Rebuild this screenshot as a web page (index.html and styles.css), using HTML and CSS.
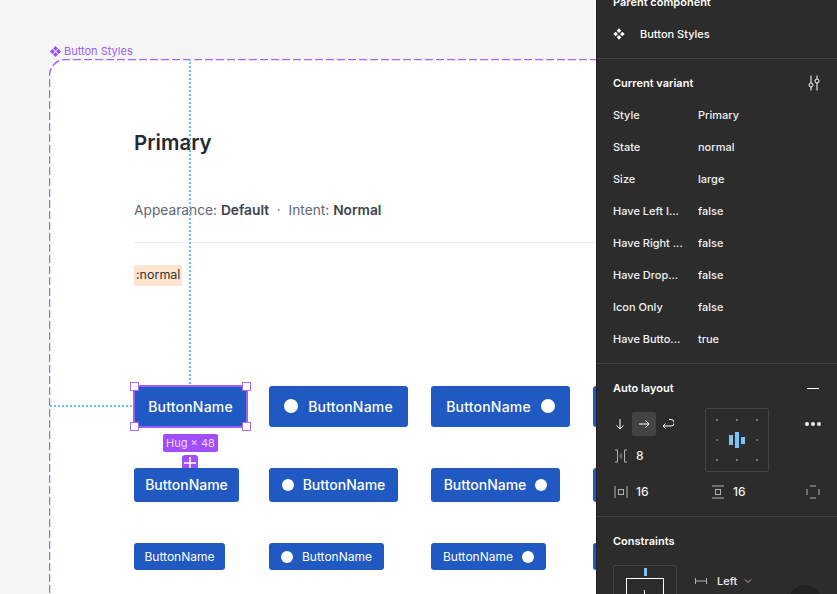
FILE: index.html
```html
<!DOCTYPE html>
<html lang="en">
<head>
  <meta charset="UTF-8">
  <meta name="viewport" content="width=device-width, initial-scale=1.0">
  <title>Button Styles</title>
  <link rel="stylesheet" href="styles.css">
</head>
<body>
  <!-- canvas -->
  <main class="canvas">
    <div class="frame-label">
      <svg class="comp-icon" viewBox="0 0 12 12" width="11" height="11"><path d="M6 0 8.600 2.700 6 5.300 3.400 2.700zM2.700 3.400 5.300 6 2.700 8.600 0 6zM9.300 3.400 12 6 9.300 8.600 6.700 6zM6 6.700 8.600 9.300 6 12 3.400 9.300z"/></svg>
      <span>Button Styles</span>
    </div>

    <section class="frame">
      <svg class="frame-dash" width="700" height="600"><path d="M.5 600V16.500A16 16 0 0 1 16.500 .5H700"/></svg>
      <h1 class="title">Primary</h1>
      <p class="meta">Appearance: <b>Default</b> &nbsp;·&nbsp; Intent: <b>Normal</b></p>
      <hr class="rule">
      <div class="tag-row"><span class="tag">:normal</span></div>

      <div class="btn-grid">
        <div class="btn btn-lg selected">
          ButtonName
          <i class="handle tl"></i><i class="handle tr"></i><i class="handle bl"></i><i class="handle br"></i>
          <span class="hug">Hug × 48</span>
          <span class="add"><svg viewBox="0 0 16 16" width="16" height="16"><path d="M8 2v12M2 8h12"/></svg></span>
        </div>
        <div class="btn btn-lg icon-left"><i class="dot"></i>ButtonName</div>
        <div class="btn btn-lg icon-right">ButtonName<i class="dot"></i></div>
        <div class="btn btn-lg"></div>

        <div class="btn btn-md">ButtonName</div>
        <div class="btn btn-md icon-left"><i class="dot"></i>ButtonName</div>
        <div class="btn btn-md icon-right">ButtonName<i class="dot"></i></div>
        <div class="btn btn-md"></div>

        <div class="btn btn-sm">ButtonName</div>
        <div class="btn btn-sm icon-left"><i class="dot"></i>ButtonName</div>
        <div class="btn btn-sm icon-right">ButtonName<i class="dot"></i></div>
        <div class="btn btn-sm"></div>
      </div>
    </section>

    <!-- measure guides -->
    <div class="guide guide-v"></div>
    <div class="guide guide-h"></div>
  </main>

  <!-- right panel -->
  <aside class="panel">
    <section class="panel-sec first">
      <h2 class="panel-head">Parent component</h2>
      <div class="parent-row">
        <svg class="parent-icon" viewBox="0 0 12 12" width="12" height="12"><path d="M6 .3 8.300 2.700 6 5 3.700 2.700zM2.700 3.700 5 6 2.700 8.300 .3 6zM9.300 3.700 11.700 6 9.300 8.300 7 6zM6 7 8.300 9.300 6 11.700 3.700 9.300z"/></svg>
        <span>Button Styles</span>
      </div>
    </section>

    <section class="panel-sec">
      <div class="head-row">
        <h2 class="panel-head">Current variant</h2>
        <svg class="line-icon" viewBox="0 0 14 16" width="14" height="16"><path d="M4 .5V8M4 12v3.500M10 .5V4M10 8v7.500"/><circle cx="4" cy="10" r="2"/><circle cx="10" cy="6" r="2"/></svg>
      </div>
      <div class="props">
        <div class="prop"><span>Style</span><span>Primary</span></div>
        <div class="prop"><span>State</span><span>normal</span></div>
        <div class="prop"><span>Size</span><span>large</span></div>
        <div class="prop"><span>Have Left I...</span><span>false</span></div>
        <div class="prop"><span>Have Right ...</span><span>false</span></div>
        <div class="prop"><span>Have Drop...</span><span>false</span></div>
        <div class="prop"><span>Icon Only</span><span>false</span></div>
        <div class="prop"><span>Have Butto...</span><span>true</span></div>
      </div>
    </section>

    <section class="panel-sec">
      <div class="head-row">
        <h2 class="panel-head">Auto layout</h2>
        <span class="minus"></span>
      </div>
      <div class="al-grid">
        <div class="dirs">
          <span class="dir"><svg class="line-icon" viewBox="0 0 12 12" width="12" height="12"><path d="M6 1v10M2.500 7.500 6 11l3.500-3.500"/></svg></span>
          <span class="dir on"><svg class="line-icon" viewBox="0 0 12 12" width="12" height="12"><path d="M1 6h10M7.500 2.500 11 6 7.500 9.500"/></svg></span>
          <span class="dir"><svg class="line-icon" viewBox="0 0 12 12" width="12" height="12"><path d="M7 1.500h2a3 3 0 0 1 0 6.500H1M3.500 5.500 1 8l2.500 2.500"/></svg></span>
        </div>
        <div class="align-box">
          <i class="pip"></i><i class="pip"></i><i class="pip"></i>
          <i class="pip"></i>
          <span class="bars"><b class="b1"></b><b class="b2"></b><b class="b3"></b></span>
          <i class="pip"></i>
          <i class="pip"></i><i class="pip"></i><i class="pip"></i>
        </div>
        <div class="more"><i></i><i></i><i></i></div>

        <div class="al-val gap-row">
          <svg class="line-icon dim" viewBox="0 0 14 14" width="14" height="14"><path d="M1 1h2.500v12H1M13 1h-2.500v12H13M7 4.500v5"/></svg>
          <span>8</span>
        </div>

        <div class="al-val pad-row">
          <svg class="line-icon dim" viewBox="0 0 14 14" width="14" height="14"><path d="M1 1v12M13 1v12"/><rect x="4.500" y="4.500" width="5" height="5"/></svg>
          <span>16</span>
        </div>
        <div class="al-val pad-row second">
          <svg class="line-icon dim" viewBox="0 0 14 14" width="14" height="14"><path d="M1 1h12M1 13h12"/><rect x="4.500" y="4.500" width="5" height="5"/></svg>
          <span>16</span>
        </div>
        <div class="pad-row indiv">
          <svg class="line-icon dim" viewBox="0 0 14 14" width="14" height="14"><path d="M4 1h6M4 13h6M1 4v6M13 4v6"/></svg>
        </div>
      </div>
    </section>

    <section class="panel-sec">
      <h2 class="panel-head">Constraints</h2>
      <div class="constraints">
        <div class="c-box">
          <i class="c-tick"></i>
          <div class="c-inner"><i class="c-cross"></i></div>
        </div>
        <div class="c-select">
          <svg class="line-icon dim" viewBox="0 0 12 8" width="12" height="8"><path d="M.5 1v6M11.500 1v6M1 4h10"/></svg>
          <span>Left</span>
          <svg class="line-icon dim chev" viewBox="0 0 8 6" width="8" height="6"><path d="M1 1.500 4 4.500 7 1.500"/></svg>
        </div>
      </div>
    </section>

    <div class="help"></div>
  </aside>
</body>
</html>
```

FILE: styles.css
```css
/* General */
html, body {
  margin: 0;
  height: 100%;
}

body {
  width: 837px;
  height: 594px;
  display: flex;
  overflow: hidden;
  font-family: 'Inter', 'Liberation Sans', sans-serif;
  background-color: #f5f5f5;
}

/* Canvas */
.canvas {
  position: relative;
  width: 596px;
  height: 594px;
  flex-shrink: 0;
  padding-top: 44px;
  box-sizing: border-box;
  overflow: hidden;
}

.frame-label {
  display: flex;
  align-items: center;
  gap: 3px;
  height: 14px;
  margin-left: 50px;
  margin-bottom: 1px;
  font-size: 11px;
  color: #9d5cf0;
}

.comp-icon {
  fill: #9747ff;
}

.frame {
  position: relative;
  width: 700px;
  height: 600px;
  margin-left: 49px;
  padding: 70px 0 0 85px;
  box-sizing: border-box;
  background-color: #fff;
  border-top-left-radius: 16px;
}

.frame-dash {
  position: absolute;
  left: 0;
  top: 0;
  fill: none;
  stroke: #a566f8;
  stroke-width: 1.500;
  stroke-dasharray: 8 3;
}

.title {
  margin: 0;
  font-size: 20.500px;
  line-height: 28px;
  font-weight: 600;
  color: #24292f;
}

.meta {
  margin: 43px 0 22px;
  font-size: 13.750px;
  line-height: 20px;
  color: #5f6773;
}

.meta b {
  font-weight: 600;
  color: #3d444f;
}

.rule {
  margin: 0;
  border: 0;
  border-top: 1px solid #e9ebef;
}

.tag-row {
  margin-top: 20px;
  height: 21px;
}

.tag {
  display: inline-block;
  width: 48px;
  height: 21px;
  box-sizing: border-box;
  padding-left: 2px;
  border-radius: 2px;
  background-color: #ffe5cf;
  font-size: 12.500px;
  line-height: 20px;
  color: #333;
}

/* Buttons */
.btn-grid {
  display: grid;
  grid-template-columns: 135px 162px 162px 162px;
  grid-auto-rows: min-content;
  row-gap: 41px;
  justify-items: start;
  margin-top: 102px;
}

.btn {
  position: relative;
  display: flex;
  align-items: center;
  justify-content: center;
  box-sizing: border-box;
  border-radius: 3px;
  background-color: #2059c2;
  color: #fff;
}

.dot {
  display: block;
  border-radius: 50%;
  background-color: #fff;
}

.btn-lg {
  width: 113px;
  height: 41px;
  padding-bottom: 1px;
  font-size: 14px;
  letter-spacing: .2px;
  font-weight: 500;
}

.btn-lg.icon-left, .btn-lg.icon-right {
  width: 139px;
  gap: 10px;
}

.btn-lg .dot {
  width: 14px;
  height: 14px;
}

.btn-md {
  width: 105px;
  height: 34px;
  padding-bottom: 1px;
  font-size: 14px;
  font-weight: 500;
}

.btn-md.icon-left, .btn-md.icon-right {
  width: 129px;
  gap: 9px;
}

.btn-md .dot {
  width: 12px;
  height: 12px;
}

.btn-sm {
  width: 91px;
  height: 27px;
  font-size: 12px;
}

.btn-sm.icon-left, .btn-sm.icon-right {
  width: 115px;
  gap: 9px;
}

.btn-sm .dot {
  width: 12px;
  height: 12px;
}

/* Selection overlay */
.selected {
  outline: 2px solid #9d5ff5;
  outline-offset: -1px;
  border-radius: 0;
}

.handle {
  position: absolute;
  width: 7px;
  height: 7px;
  background-color: #fff;
  border: 1px solid #a66bf7;
}

.tl { left: -4px; top: -4px; }
.tr { right: -4px; top: -4px; }
.bl { left: -4px; bottom: -4px; }
.br { right: -4px; bottom: -4px; }

.hug {
  position: absolute;
  left: 29px;
  top: 48px;
  width: 55px;
  height: 18px;
  border-radius: 2px;
  background-color: #a14ffb;
  font-size: 11px;
  letter-spacing: 0;
  font-weight: 400;
  line-height: 18px;
  text-align: center;
  color: #ead9ff;
}

.add {
  position: absolute;
  left: 48px;
  top: 69px;
  width: 16px;
  height: 16px;
  border-radius: 3px;
  background-color: #a14ffb;
}

.add svg {
  display: block;
  fill: none;
  stroke: #fff;
  stroke-width: 1.500;
}

/* Guides */
.guide {
  position: absolute;
}

.guide-v {
  left: 190px;
  top: 59px;
  height: 325px;
  border-left: 2px dotted #6cc0ff;
  width: 0;
  margin-left: -1px;
}

.guide-h {
  left: 50px;
  top: 406px;
  width: 82px;
  border-top: 2px dotted #6cc0ff;
  margin-top: -1px;
}

/* Panel */
.panel {
  position: relative;
  width: 241px;
  height: 594px;
  flex-shrink: 0;
  box-sizing: border-box;
  overflow: hidden;
  background-color: #2c2c2c;
  border-left: 1px solid #1f1f1f;
  font-size: 11px;
  line-height: 16px;
  color: #fff;
}

.panel-sec {
  padding: 16px 16px 8px;
  border-bottom: 1px solid #444;
}

.panel-sec.first {
  margin-top: -22px;
  padding-bottom: 16px;
}

.panel-head {
  margin: 0;
  font-size: 11px;
  line-height: 16px;
  font-weight: 600;
}

.parent-row {
  display: flex;
  align-items: center;
  gap: 15px;
  margin-top: 16px;
  font-weight: 500;
}

.parent-icon {
  fill: #fff;
}

.head-row {
  display: flex;
  align-items: center;
  justify-content: space-between;
}

.line-icon {
  display: block;
  fill: none;
  stroke: #fff;
  stroke-width: 1;
}

.line-icon.dim {
  stroke: #b3b3b3;
}

.props {
  margin-top: 8px;
}

.prop {
  display: grid;
  grid-template-columns: 85px 1fr;
  align-items: center;
  height: 32px;
  font-weight: 500;
  color: #f0f0f0;
}

.minus {
  display: block;
  width: 12px;
  border-top: 1px solid #fff;
  margin-right: 2px;
}

/* Auto layout */
.al-grid {
  display: grid;
  grid-template-columns: 92px 72px 1fr;
  grid-template-rows: 32px 32px 36px;
  margin-top: 12px;
}

.dirs {
  display: flex;
  align-items: center;
  margin-left: -5px;
}

.dir {
  display: flex;
  align-items: center;
  justify-content: center;
  width: 24px;
  height: 24px;
  border-radius: 2px;
}

.dir.on {
  background-color: #444;
}

.align-box {
  grid-column: 2;
  grid-row: 1 / span 2;
  display: grid;
  grid-template-columns: repeat(3, 20px);
  grid-template-rows: repeat(3, 20px);
  place-items: center;
  align-content: center;
  justify-content: center;
  width: 64px;
  height: 64px;
  box-sizing: border-box;
  border: 1px solid #444;
  border-radius: 2px;
}

.pip {
  width: 2px;
  height: 2px;
  background-color: #777;
}

.bars {
  display: flex;
  align-items: center;
  gap: 2px;
}

.bars b {
  display: block;
  width: 4px;
  background-color: #7cc4f8;
}

.b1 { height: 10px; }
.b2 { height: 16px; }
.b3 { height: 7px; }

.more {
  display: flex;
  align-items: center;
  justify-content: flex-end;
  gap: 2px;
  height: 32px;
}

.more i {
  width: 4px;
  height: 4px;
  border-radius: 50%;
  background-color: #eee;
}

.al-val {
  display: flex;
  align-items: center;
  gap: 8px;
  padding-left: 1px;
  font-size: 12px;
  font-weight: 500;
  color: #f0f0f0;
}

.gap-row {
  grid-column: 1;
  grid-row: 2;
}

.al-val.pad-row {
  grid-row: 3;
  margin-top: 4px;
  height: 32px;
}

.al-val.second {
  padding-left: 6px;
}

.indiv {
  grid-row: 3;
  display: flex;
  align-items: center;
  justify-content: flex-end;
  height: 32px;
  margin-top: 4px;
  padding-right: 1px;
}

/* Constraints */
.constraints {
  display: flex;
  gap: 18px;
  margin-top: 16px;
}

.c-box {
  position: relative;
  width: 64px;
  height: 64px;
  flex-shrink: 0;
  box-sizing: border-box;
  border: 1px solid #444;
  border-radius: 2px;
}

.c-tick {
  position: absolute;
  left: 30px;
  top: 2px;
  width: 3px;
  height: 8px;
  background-color: #7cc4f8;
}

.c-inner {
  position: absolute;
  left: 12px;
  top: 12px;
  width: 38px;
  height: 38px;
  box-sizing: border-box;
  border: 1px solid #fff;
}

.c-cross {
  position: absolute;
  left: 17px;
  top: 11px;
  width: 1px;
  height: 12px;
  background-color: #fff;
}

.c-select {
  display: flex;
  align-items: center;
  height: 16px;
  margin-top: 8px;
  gap: 10px;
  font-size: 11px;
  font-weight: 500;
  color: #f0f0f0;
}

.chev {
  margin-left: -3px;
}

.help {
  position: absolute;
  left: 192px;
  top: 585px;
  width: 32px;
  height: 32px;
  border-radius: 50%;
  background-color: #222;
}
```
